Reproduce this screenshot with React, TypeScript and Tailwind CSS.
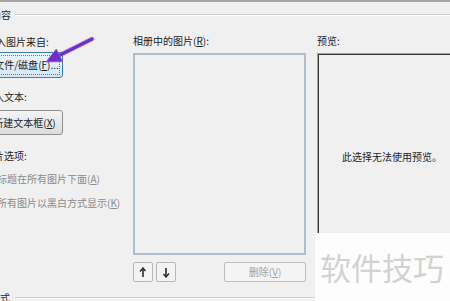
function Key({ k }: { k: string }) {
  return (
    <>
      (<span className="underline underline-offset-1">{k}</span>)
    </>
  )
}

// Shows only the right-hand sliver of text that runs off the left edge
function Cut({ text, w }: { text: string; w: string }) {
  return (
    <span className={`inline-flex justify-end overflow-hidden ${w}`}>
      <span className="shrink-0">{text}</span>
    </span>
  )
}

function MoveIcon({ up }: { up?: boolean }) {
  return (
    <svg width="8" height="11" viewBox="0 0 8 11" className={up ? '' : 'rotate-180'}>
      <path d="M4 1.5 L4 10" stroke="#2b2b2b" strokeWidth="1.6" />
      <path d="M1 4.5 L4 1 L6.5 4" fill="none" stroke="#2b2b2b" strokeWidth="1.4" />
    </svg>
  )
}

export default function App() {
  return (
    <div className="relative flex h-[301px] w-[450px] flex-col overflow-hidden bg-[#f0f0f0] font-['Noto_Sans_CJK_SC',sans-serif] text-[10px] leading-[12px] text-[#1e1e1e]">
      <div className="h-[2px] shrink-0 bg-[#a6a6a6]" />

      {/* 相册内容 */}
      <div className="mt-[7px] flex h-[12px] shrink-0 items-center">
        <span className="-ml-[9px] whitespace-nowrap">内容</span>
        <div className="ml-[4px] h-[2px] flex-1 border-t border-b border-t-[#cdcdcd] border-b-white" />
      </div>

      <div className="mt-[14px] flex shrink-0">
        {/* Left column */}
        <div className="flex w-[133px] shrink-0 flex-col items-start">
          <span className="mt-px flex whitespace-nowrap">
            <Cut text="插入" w="w-[6px]" />
            图片来自:
          </span>
          <button className="mt-[4px] -ml-[14px] flex h-[26px] w-[77px] items-center justify-center rounded-[3px] border border-[#3c7fb1] bg-linear-to-b from-[#eaf5fc] to-[#d3e7f5] p-[2px]">
            <span className="flex h-full w-full items-center justify-center whitespace-nowrap border border-dotted border-[#4d8199] pl-[4px]">
              文件/磁盘<Key k="F" />...
            </span>
          </button>
          <span className="mt-[13px] flex whitespace-nowrap">
            <Cut text="插入" w="w-[4px]" />
            文本:
          </span>
          <button className="mt-[7px] -ml-[14px] flex h-[25px] w-[77px] items-center justify-center whitespace-nowrap rounded-[3px] border border-[#8f8f8f] bg-linear-to-b from-[#f4f4f4] to-[#dcdcdc]">
            新建文本框<Key k="X" />
          </button>
          <span className="mt-[15px] flex whitespace-nowrap">
            <Cut text="图片" w="w-[4px]" />
            选项:
          </span>
          <span className="mt-[11px] -ml-[3px] whitespace-nowrap text-[#8a8a8a]">
            标题在所有图片下面<Key k="A" />
          </span>
          <span className="mt-[12px] -ml-[3px] whitespace-nowrap text-[#8a8a8a]">
            所有图片以黑白方式显示<Key k="K" />
          </span>
        </div>

        {/* Middle column */}
        <div className="flex w-[173px] shrink-0 flex-col">
          <span className="whitespace-nowrap">
            相册中的图片<Key k="R" />:
          </span>
          <div className="mt-[6px] h-[202px] border-2 border-[#aebccb] bg-[#f0f0f0]" />
          <div className="mt-[7px] flex h-[20px] items-stretch">
            <button className="flex w-[20px] items-center justify-center rounded-[2px] border border-[#b5b8ba] bg-[#f3f3f3]">
              <MoveIcon up />
            </button>
            <button className="ml-[3px] flex w-[20px] items-center justify-center rounded-[2px] border border-[#b5b8ba] bg-[#f3f3f3]">
              <MoveIcon />
            </button>
            <button className="ml-auto flex w-[82px] items-center justify-center whitespace-nowrap rounded-[2px] border border-[#bdbdbd] bg-[#f4f4f4] text-[#a3a3a3]">
              删除<Key k="V" />
            </button>
          </div>
        </div>

        {/* Right column */}
        <div className="ml-[11px] flex flex-col items-start">
          <span className="whitespace-nowrap">预览:</span>
          <div className="mt-[6px] h-[206px] w-[148px] shrink-0 border-t border-l border-[#a0a0a0]">
            <div className="flex h-full w-full items-center justify-center whitespace-nowrap border-t border-l border-[#3a3a3a]">
              此选择无法使用预览。
            </div>
          </div>
        </div>
      </div>

      {/* 相册版式 */}
      <div className="mt-[10px] flex h-[12px] shrink-0 items-center">
        <span className="-ml-[10px] whitespace-nowrap">版式</span>
        <div className="ml-[5px] h-[2px] flex-1 border-t border-b border-t-[#cdcdcd] border-b-white" />
      </div>

      {/* Watermark */}
      <div className="absolute top-[233px] right-0 bottom-0 left-[315px] bg-[#fdfdfd] pt-[18px] pl-[5px] text-[31px] leading-[31px] whitespace-nowrap text-[#d2d2d2]">
        软件技巧
      </div>

      {/* Annotation arrow */}
      <svg className="pointer-events-none absolute top-0 left-0" width="100" height="70" viewBox="0 0 100 70">
        <line x1="92" y1="39" x2="58" y2="56" stroke="#9a6ee0" strokeWidth="5" strokeLinecap="round" opacity="0.45" />
        <line x1="92" y1="39" x2="58" y2="56" stroke="#6d2fc6" strokeWidth="3.2" strokeLinecap="round" />
        <polygon points="46,62 56.3,49 62.5,61.6" fill="#6d2fc6" stroke="#8a58d8" strokeWidth="0.8" strokeLinejoin="round" />
      </svg>
    </div>
  )
}
